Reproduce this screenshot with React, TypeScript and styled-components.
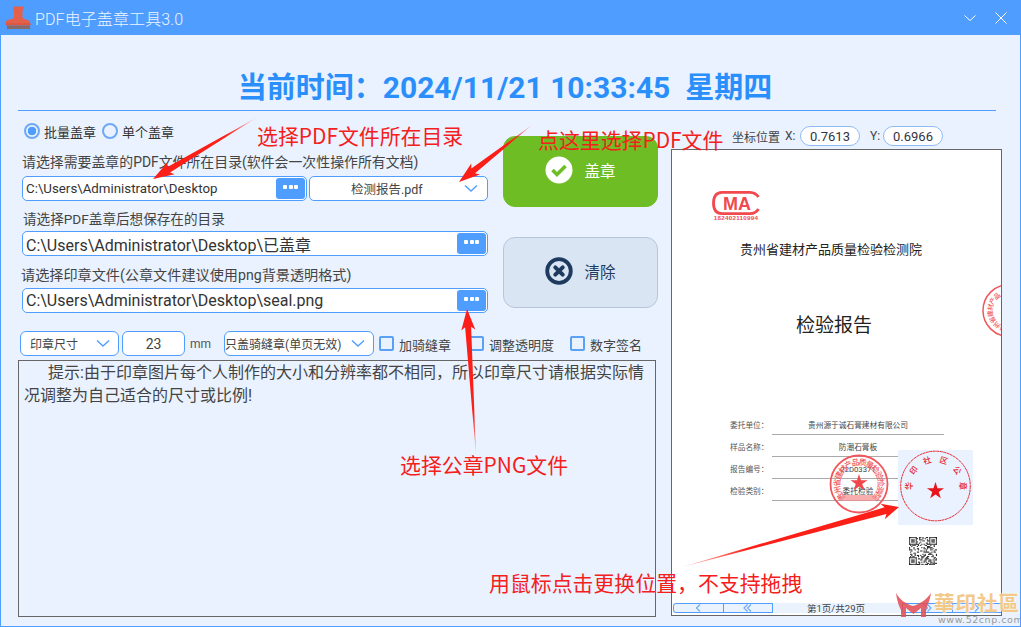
import React from "react";
import styled, { createGlobalStyle } from "styled-components";

const Global = createGlobalStyle`
  html, body { margin: 0; padding: 0; background: #e9f2fe; overflow: hidden; }
  * { box-sizing: border-box; }
`;
const BLUE = "#4f9dff";
const UI = `Roboto, "Noto Sans CJK SC", sans-serif`;

const Window = styled.div`
  position: relative; width: 1021px; height: 627px; overflow: hidden;
  background: #e9f2fe; border: 1px solid ${BLUE}; border-top: 0;
  font-family: ${UI}; color: #333;
`;
const TitleBar = styled.header`
  height: 35px; margin: 0 -1px; background: ${BLUE}; display: flex; align-items: center;
  padding: 0 14px 0 5px; color: #fff;
`;
const AppTitle = styled.div`
  margin-left: 4px; font-size: 16px; color: #eef5ff; flex: 1; letter-spacing: 0.1px; font-weight: 300;
`;
const WinBtn = styled.svg`
  width: 12px; height: 12px; margin-left: 19px; fill: none; stroke: #fff; stroke-width: 1;
`;
const ClockBar = styled.div`
  height: 76px; margin: 0 24px 0 17px; border-bottom: 1px solid ${BLUE};
  display: flex; align-items: center; justify-content: center; padding: 31px 4px 0 0;
`;
const Clock = styled.h1`
  margin: 0; font-size: 29px; font-weight: 700; color: #2b8ffb; white-space: pre; line-height: 36px;
`;
const ClockDigits = styled.span`
  font-size: 30px;
`;
const Main = styled.main`
  display: flex; padding-left: 17px;
`;
const LeftCol = styled.div`
  width: 640px; display: flex; flex-direction: column;
`;
const TopArea = styled.div`
  display: flex;
`;
const Forms = styled.div`
  width: 470px; display: flex; flex-direction: column; padding-top: 12px;
`;
const RadioRow = styled.div`
  display: flex; align-items: center; height: 16px; padding-left: 6px; font-size: 13px;
`;
const Radio = styled.span<{ $on?: boolean }>`
  width: 16px; height: 16px; border-radius: 50%; border: 2px solid #6ea9f5; margin-right: 4px; flex: none;
  background: ${(p) => (p.$on ? `radial-gradient(circle, ${BLUE} 0 4px, #e9f2fe 4.6px)` : "transparent")};
`;
const RadioLabel = styled.span`
  margin-right: 6px; width: 52px; white-space: nowrap;
`;
const Label = styled.div<{ $top: number; $left: number; $size: number }>`
  margin-top: ${(p) => p.$top}px; padding-left: ${(p) => p.$left}px; height: 18px; line-height: 18px;
  font-size: ${(p) => p.$size}px; color: #444; white-space: nowrap;
`;
const FieldRow = styled.div<{ $top: number }>`
  display: flex; gap: 2px; margin: ${(p) => p.$top}px 0 0 4px; width: 466px;
`;
const Field = styled.div<{ $big?: boolean }>`
  flex: 1; min-width: 0; height: 25px; background: #fff; border: 1px solid ${BLUE}; border-radius: 5px;
  display: flex; align-items: center; padding: 0 1px 0 3px; font-size: ${(p) => (p.$big ? 16 : 13.3)}px; color: #333;
  white-space: nowrap;
`;
const FieldText = styled.span`
  flex: 1;
`;
const DotsBtn = styled.div`
  width: 29px; height: 21px; background: ${BLUE}; border-radius: 3px; display: flex; gap: 1.5px;
  align-items: center; justify-content: center; padding-bottom: 3px;
`;
const Dot = styled.i`
  width: 4px; height: 4px; background: #fff; border-radius: 1px;
`;
const FileSelect = styled.div`
  width: 179px; flex: none; height: 25px; background: #fff; border: 1px solid ${BLUE}; border-radius: 5px;
  display: flex; align-items: center; font-size: 12.5px; padding: 0 8px 0 41px; color: #444; white-space: nowrap;
`;
const Chevron = styled.svg`
  width: 16px; height: 9px; fill: none; stroke: ${BLUE}; stroke-width: 1.4; margin-left: auto; flex: none;
`;
const Actions = styled.div`
  margin-left: 15px; width: 155px; padding-top: 25px; display: flex; flex-direction: column; gap: 30px;
`;
const ActionBtn = styled.div<{ $green?: boolean }>`
  height: 71px; border-radius: 12px; display: flex; align-items: center; justify-content: center; gap: 11px;
  padding-bottom: 3px; font-size: 15.5px;
  background: ${(p) => (p.$green ? "#6fbd24" : "#d9e5f3")};
  color: ${(p) => (p.$green ? "#fff" : "#1e3a5f")};
  border: 1px solid ${(p) => (p.$green ? "#6fbd24" : "#b6c6da")};
`;
const OptionRow = styled.div`
  display: flex; align-items: center; margin: 18px 0 0 2px; height: 25px; font-size: 13px;
`;
const Small = styled.div<{ $w: number; $pad?: number; $gap?: number }>`
  width: ${(p) => p.$w}px; height: 25px; flex: none; background: #fff; border: 1px solid ${BLUE}; border-radius: 6px;
  display: flex; align-items: center; padding: 0 7px 0 ${(p) => p.$pad ?? 9}px; margin-right: ${(p) => p.$gap ?? 3}px;
  font-size: 12px; color: #444; white-space: nowrap;
`;
const SizeInput = styled(Small)`
  justify-content: center; font-size: 14px; padding: 0;
`;
const Unit = styled.span`
  font-size: 12px; color: #555; margin: 0 13px 0 2px;
`;
const Check = styled.span`
  width: 15px; height: 15px; border: 2px solid #5aa0f5; border-radius: 2px; margin-right: 5px; flex: none;
`;
const CheckLabel = styled.span<{ $w: number }>`
  width: ${(p) => p.$w}px; white-space: nowrap; color: #444; padding-top: 2px;
`;
const Notes = styled.div`
  margin: 4px 0 0 0; width: 638px; height: 257px; border: 1px solid #666; padding: 0 10px 0 5px; font-size: 16px;
  line-height: 23px; text-indent: 24px; color: #444;
`;
const RightCol = styled.div`
  width: 331px; margin-left: 13px; display: flex; flex-direction: column; padding-top: 15px;
`;
const CoordRow = styled.div`
  height: 20px; display: flex; align-items: center; padding-left: 61px; font-size: 12px; color: #444;
`;
const CoordLabel = styled.span<{ $l: number; $w: number }>`
  margin-left: ${(p) => p.$l}px; width: ${(p) => p.$w}px; white-space: nowrap;
`;
const Pill = styled.span`
  width: 60px; height: 20px; background: #fff; border: 1px solid #8ebbf5; border-radius: 10px;
  display: flex; align-items: center; justify-content: center; font-size: 13px; color: #334;
`;
const Pane = styled.div`
  position: relative; margin-top: 3px; width: 331px; height: 467px; background: #fff; border: 1px solid #666; overflow: hidden;
`;
const Doc = styled.div<{ $x: number; $y: number; $size: number; $color?: string }>`
  position: absolute; left: ${(p) => p.$x - 672}px; top: ${(p) => p.$y - 150}px; transform: translateY(-50%);
  font-size: ${(p) => p.$size}px; color: ${(p) => p.$color ?? "#222"}; white-space: nowrap; line-height: 1;
`;
const DocCenter = styled(Doc)`
  transform: translate(-50%, -50%);
`;
const DocLine = styled.div<{ $y: number }>`
  position: absolute; left: 100px; width: 172px; top: ${(p) => p.$y - 150}px; height: 1px; background: #aaa;
`;
const DocArt = styled.svg<{ $x: number; $y: number }>`
  position: absolute; left: ${(p) => p.$x - 672}px; top: ${(p) => p.$y - 150}px; overflow: visible;
`;
const Pager = styled.div`
  position: absolute; left: 1px; right: 0; bottom: 2px; height: 10px; background: #eaf2fe; display: flex;
  font-size: 9.5px; color: #444; align-items: center;
`;
const PageBtn = styled.div<{ $round?: boolean }>`
  width: 50.5px; height: 10px; border: 1px solid ${BLUE}; margin-right: -1px;
  border-radius: ${(p) => (p.$round ? "3px 0 0 3px" : "0")};
  display: flex; align-items: center; justify-content: center;
`;
const PageGlyph = styled.svg`
  width: 9px; height: 8px; fill: none; stroke: #6aa8f5; stroke-width: 1.1;
`;
const PageInfo = styled.div`
  flex: 1; text-align: center; white-space: nowrap; padding-right: 2px;
`;
const Overlay = styled.svg`
  position: absolute; left: 0; top: 0; width: 1021px; height: 627px; pointer-events: none;
`;
const Note = styled.div<{ $x: number; $y: number }>`
  position: absolute; left: ${(p) => p.$x}px; top: ${(p) => p.$y}px; transform: translateY(-50%);
  font-size: 20.9px; line-height: 1; color: #f5201c; white-space: nowrap; font-family: "Noto Sans CJK SC", sans-serif; font-weight: 400;
`;
const MarkName = styled.div`
  position: absolute; left: 933px; top: 589px; font-family: "Noto Sans CJK TC", sans-serif; font-weight: 700; font-size: 20.5px;
  letter-spacing: 1px; color: #f3c98a; white-space: nowrap; line-height: 26px; text-shadow: 0 0 2px #fff;
`;
const MarkUrl = styled.div`
  position: absolute; left: 937px; top: 614px; font-family: "DejaVu Sans", sans-serif; font-size: 9.5px; letter-spacing: 0.55px;
  color: #9a9a9a; white-space: nowrap; line-height: 12px;
`;

type Pt = [number, number];
function Arrow({ id, from, to, w = 6, head = 18, headW = 7 }: { id: string; from: Pt; to: Pt; w?: number; head?: number; headW?: number }) {
  const dx = to[0] - from[0], dy = to[1] - from[1];
  const len = Math.hypot(dx, dy), ux = dx / len, uy = dy / len, nx = -uy, ny = ux;
  const at = (d: number, s: number) => `${from[0] + ux * d + nx * s},${from[1] + uy * d + ny * s}`;
  const neck = len - head;
  const pts = [at(0, 0), at(neck, w / 2), at(neck - 3, headW), at(len, 0), at(neck - 3, -headW), at(neck, -w / 2)].join(" ");
  return (
    <>
      <defs>
        <linearGradient id={id} gradientUnits="userSpaceOnUse" x1={from[0]} y1={from[1]} x2={to[0]} y2={to[1]}>
          <stop offset="0" stopColor="#ff2a20" stopOpacity="0.25" />
          <stop offset="0.3" stopColor="#fb1f18" />
          <stop offset="1" stopColor="#fb1f18" />
        </linearGradient>
      </defs>
      <polygon points={pts} fill={`url(#${id})`} />
    </>
  );
}

function Star({ cx, cy, r, color = "#e8141c" }: { cx: number; cy: number; r: number; color?: string }) {
  const pts = Array.from({ length: 10 }, (_, i) => {
    const a = -Math.PI / 2 + (i * Math.PI) / 5;
    const q = i % 2 ? r * 0.38 : r;
    return `${cx + Math.cos(a) * q},${cy + Math.sin(a) * q}`;
  }).join(" ");
  return <polygon points={pts} fill={color} />;
}

function ArcText({ chars, cx, cy, r, from, to, size, color, bold }: { chars: string; cx: number; cy: number; r: number; from: number; to: number; size: number; color: string; bold?: boolean }) {
  const list = Array.from(chars);
  return (
    <>
      {list.map((c, i) => {
        const deg = from + ((to - from) * i) / (list.length - 1);
        const rad = (deg * Math.PI) / 180;
        const x = cx + Math.cos(rad) * r, y = cy + Math.sin(rad) * r;
        return (
          <text key={i} transform={`translate(${x} ${y}) rotate(${deg + 90})`} textAnchor="middle" dominantBaseline="central"
            fontFamily="Noto Sans CJK SC" fontWeight={bold ? 700 : 500} fontSize={size} fill={color}>
            {c}
          </text>
        );
      })}
    </>
  );
}

const Dots = () => (
  <DotsBtn>
    <Dot />
    <Dot />
    <Dot />
  </DotsBtn>
);
const Down = () => (
  <Chevron viewBox="0 0 16 9">
    <polyline points="2,1.5 8,7 14,1.5" />
  </Chevron>
);

const qrBits = Array.from({ length: 25 * 25 }, (_, i) => ((i * 7919 + (i * i) % 97 * 31) >> 2) % 5 < 2);
function inFinder(x: number, y: number) {
  return (x < 7 && y < 7) || (x > 17 && y < 7) || (x < 7 && y > 17);
}
function finderOn(x: number, y: number) {
  const f = (a: number, b: number) => {
    const m = Math.max(Math.abs(a - 3), Math.abs(b - 3));
    return m === 3 || m <= 1;
  };
  if (x < 7 && y < 7) return f(x, y);
  if (x > 17 && y < 7) return f(x - 18, y);
  return f(x, y - 18);
}

export default function App() {
  return (
    <Window>
      <Global />
      <TitleBar>
        <svg width="26" height="26" viewBox="0 0 26 26">
          <path d="M9 1.500h9.500v2.500l-1 1V12c0 1.500.8 2 2.500 2.300l2 .4c2 .4 2.800 1.300 2.800 3V19H.7v-1.300c0-1.700 1-2.600 2.800-3l2-.4C7.200 14 9 13.500 9 12V5L8 4z" fill="#e5604a" />
          <rect x="0.700" y="18" width="25" height="2.500" rx="1" fill="#dc5843" />
          <rect x="2" y="20.500" width="23" height="3.500" fill="#8a6a66" />
        </svg>
        <AppTitle>PDF电子盖章工具3.0</AppTitle>
        <WinBtn viewBox="0 0 12 12">
          <polyline points="0.500,3.500 6,8.500 11.500,3.500" />
        </WinBtn>
        <WinBtn viewBox="0 0 12 12">
          <path d="M0.500 0.500L11.500 11.500M11.500 0.500L0.500 11.500" />
        </WinBtn>
      </TitleBar>
      <ClockBar>
        <Clock>
          当前时间：<ClockDigits>{"2024/11/21 10:33:45  "}</ClockDigits>星期四
        </Clock>
      </ClockBar>
      <Main>
        <LeftCol>
          <TopArea>
            <Forms>
              <RadioRow>
                <Radio $on />
                <RadioLabel>批量盖章</RadioLabel>
                <Radio />
                <RadioLabel>单个盖章</RadioLabel>
              </RadioRow>
              <Label $top={14} $left={4} $size={13.9}>请选择需要盖章的PDF文件所在目录(软件会一次性操作所有文档)</Label>
              <FieldRow $top={5}>
                <Field>
                  <FieldText>C:\Users\Administrator\Desktop</FieldText>
                  <Dots />
                </Field>
                <FileSelect>
                  检测报告.pdf
                  <Down />
                </FileSelect>
              </FieldRow>
              <Label $top={9} $left={5} $size={13.6}>请选择PDF盖章后想保存在的目录</Label>
              <FieldRow $top={3}>
                <Field $big>
                  <FieldText>C:\Users\Administrator\Desktop\已盖章</FieldText>
                  <Dots />
                </Field>
              </FieldRow>
              <Label $top={10} $left={3} $size={14.15}>请选择印章文件(公章文件建议使用png背景透明格式)</Label>
              <FieldRow $top={4}>
                <Field $big>
                  <FieldText>C:\Users\Administrator\Desktop\seal.png</FieldText>
                  <Dots />
                </Field>
              </FieldRow>
            </Forms>
            <Actions>
              <ActionBtn $green>
                <svg width="28" height="28" viewBox="0 0 28 28">
                  <circle cx="14" cy="14" r="13.500" fill="#fff" />
                  <polyline points="7.500,14 12,18.500 20.500,10" fill="none" stroke="#6fbd24" strokeWidth="3.600" />
                </svg>
                盖章
              </ActionBtn>
              <ActionBtn>
                <svg width="28" height="28" viewBox="0 0 28 28">
                  <circle cx="14" cy="14" r="11.800" fill="none" stroke="#1e3a5f" strokeWidth="3.800" />
                  <path d="M10.300 10.300L17.700 17.700M17.700 10.300L10.300 17.700" stroke="#1e3a5f" strokeWidth="4" strokeLinecap="round" />
                </svg>
                清除
              </ActionBtn>
            </Actions>
          </TopArea>
          <OptionRow>
            <Small $w={99}>
              印章尺寸
              <Down />
            </Small>
            <SizeInput $w={63}>23</SizeInput>
            <Unit>mm</Unit>
            <Small $w={150} $pad={0} $gap={5}>
              只盖骑缝章(单页无效)
              <Down />
            </Small>
            <Check />
            <CheckLabel $w={70}>加骑缝章</CheckLabel>
            <Check />
            <CheckLabel $w={81}>调整透明度</CheckLabel>
            <Check />
            <CheckLabel $w={60}>数字签名</CheckLabel>
          </OptionRow>
          <Notes>提示:由于印章图片每个人制作的大小和分辨率都不相同，所以印章尺寸请根据实际情况调整为自己适合的尺寸或比例!</Notes>
        </LeftCol>
        <RightCol>
          <CoordRow>
            <CoordLabel $l={0} $w={53}>坐标位置</CoordLabel>
            <CoordLabel $l={0} $w={15}>X:</CoordLabel>
            <Pill>0.7613</Pill>
            <CoordLabel $l={10} $w={13}>Y:</CoordLabel>
            <Pill>0.6966</Pill>
          </CoordRow>
          <Pane>
            <DocArt $x={712} $y={190} width="48" height="32" viewBox="0 0 48 32">
              <path d="M46.500 7C45 4.500 42 2.500 38 2.300H10C4.500 2.500 1.500 6.500 1.500 13S4.500 23.500 10 23.700H38C42 23.500 45 21.500 46.500 19" fill="none" stroke="#f0494e" strokeWidth="2.800" />
              <text x="25" y="19.500" textAnchor="middle" fontFamily="Liberation Sans" fontWeight="700" fontSize="18" fill="#f0494e">MA</text>
              <text x="24" y="30" textAnchor="middle" fontFamily="Liberation Sans" fontWeight="700" fontSize="6.200" letterSpacing="0.300" fill="#f0494e">182402110994</text>
            </DocArt>
            <DocCenter $x={831} $y={249} $size={13}>贵州省建材产品质量检验检测院</DocCenter>
            <DocCenter $x={834} $y={325} $size={19}>检验报告</DocCenter>
            <Doc $x={730} $y={426} $size={7.700} $color="#555">委托单位：</Doc>
            <Doc $x={730} $y={448} $size={7.700} $color="#555">样品名称：</Doc>
            <Doc $x={730} $y={470} $size={7.700} $color="#555">报告编号：</Doc>
            <Doc $x={730} $y={492} $size={7.700} $color="#555">检验类别：</Doc>
            <DocLine $y={434} />
            <DocLine $y={456} />
            <DocLine $y={478} />
            <DocLine $y={500} />
            <DocCenter $x={858} $y={426} $size={7.700} $color="#444">贵州源于诚石膏建材有限公司</DocCenter>
            <DocCenter $x={858} $y={448} $size={7.700} $color="#444">防潮石膏板</DocCenter>
            <DocCenter $x={858} $y={470} $size={7.700} $color="#444">22D03371</DocCenter>
            <DocCenter $x={858} $y={492} $size={7.700} $color="#444">委托检验</DocCenter>
            <DocArt $x={829} $y={454} width="60" height="60" viewBox="0 0 60 60">
              <circle cx="30" cy="30" r="28.500" fill="none" stroke="#f0575c" strokeWidth="1.800" />
              <ArcText chars="贵州省建材产品质量检验检测院" cx={30} cy={30} r={22.500} from={-215} to={35} size={8} color="#f0575c" />
              <Star cx={30} cy={29} r={9} color="#f0474c" />
              <rect x="13" y="41" width="34" height="6" fill="#f58a8d" opacity="0.7" />
            </DocArt>
            <DocArt $x={898} $y={450} width="75" height="75" viewBox="0 0 75 75">
              <rect width="75" height="75" fill="#e9f2fe" />
              <circle cx="37.500" cy="36" r="34.800" fill="none" stroke="#e8141c" strokeWidth="0.900" strokeDasharray="3 0.500" />
              <ArcText chars="华印社区公章" cx={37.500} cy={36} r={27.500} from={-180} to={0} size={8} color="#e8141c" />
              <Star cx={37.500} cy={41} r={9} />
            </DocArt>
            <DocArt $x={982} $y={283} width="54" height="55" viewBox="0 0 54 55">
              <circle cx="27" cy="27.500" r="26" fill="none" stroke="#f0575c" strokeWidth="1.500" />
              <ArcText chars="贵州省建材产品" cx={27} cy={27.500} r={19.500} from={-250} to={-130} size={6.500} color="#f0575c" />
            </DocArt>
            <DocArt $x={909} $y={537} width="28" height="28" viewBox="0 0 25 25">
              {qrBits.map((b, i) => {
                const x = i % 25, y = Math.floor(i / 25);
                const on = inFinder(x, y) ? finderOn(x, y) : b;
                return on ? <rect key={i} x={x} y={y} width="1" height="1" fill="#222" /> : null;
              })}
            </DocArt>
            <Pager>
              <PageBtn $round>
                <PageGlyph viewBox="0 0 9 8"><polyline points="6,0.500 2.500,4 6,7.500" /></PageGlyph>
              </PageBtn>
              <PageBtn>
                <PageGlyph viewBox="0 0 9 8"><path d="M4.500 0.500L1 4L4.500 7.500M8 0.500L4.500 4L8 7.500" /></PageGlyph>
              </PageBtn>
              <PageInfo>第1页/共29页</PageInfo>
              <PageBtn>
                <PageGlyph viewBox="0 0 9 8"><path d="M1 0.500L4.500 4L1 7.500M4.500 0.500L8 4L4.500 7.500" /></PageGlyph>
              </PageBtn>
              <PageBtn>
                <PageGlyph viewBox="0 0 9 8"><polyline points="3,0.500 6.500,4 3,7.500" /></PageGlyph>
              </PageBtn>
            </Pager>
          </Pane>
        </RightCol>
      </Main>

      <Overlay viewBox="0 0 1021 627">
        <Arrow id="a1" from={[255, 118]} to={[152, 179]} />
        <Arrow id="a2" from={[531, 125]} to={[458, 182]} />
        <Arrow id="a3" from={[475, 455]} to={[466, 309]} />
        <Arrow id="a4" from={[681, 567]} to={[898, 507]} w={7} head={14} headW={8} />
        <path d="M895 593C899 600 905 604 912 606C919 604 925 600 930 593C929 601 926 606 925 610L925 617L920 617L920 608L912.500 614L905 608L905 617L900 617L900 610C898 606 896 601 895 593Z" fill="#e44e55" opacity="0.88" />
      </Overlay>
      <Note $x={256} $y={135}>选择PDF文件所在目录</Note>
      <Note $x={537} $y={139}>点这里选择PDF文件</Note>
      <Note $x={399} $y={464}>选择公章PNG文件</Note>
      <Note $x={488} $y={582}>用鼠标点击更换位置，不支持拖拽</Note>
      <MarkName>華印社區</MarkName>
      <MarkUrl>www.52cnp.com</MarkUrl>
    </Window>
  );
}
